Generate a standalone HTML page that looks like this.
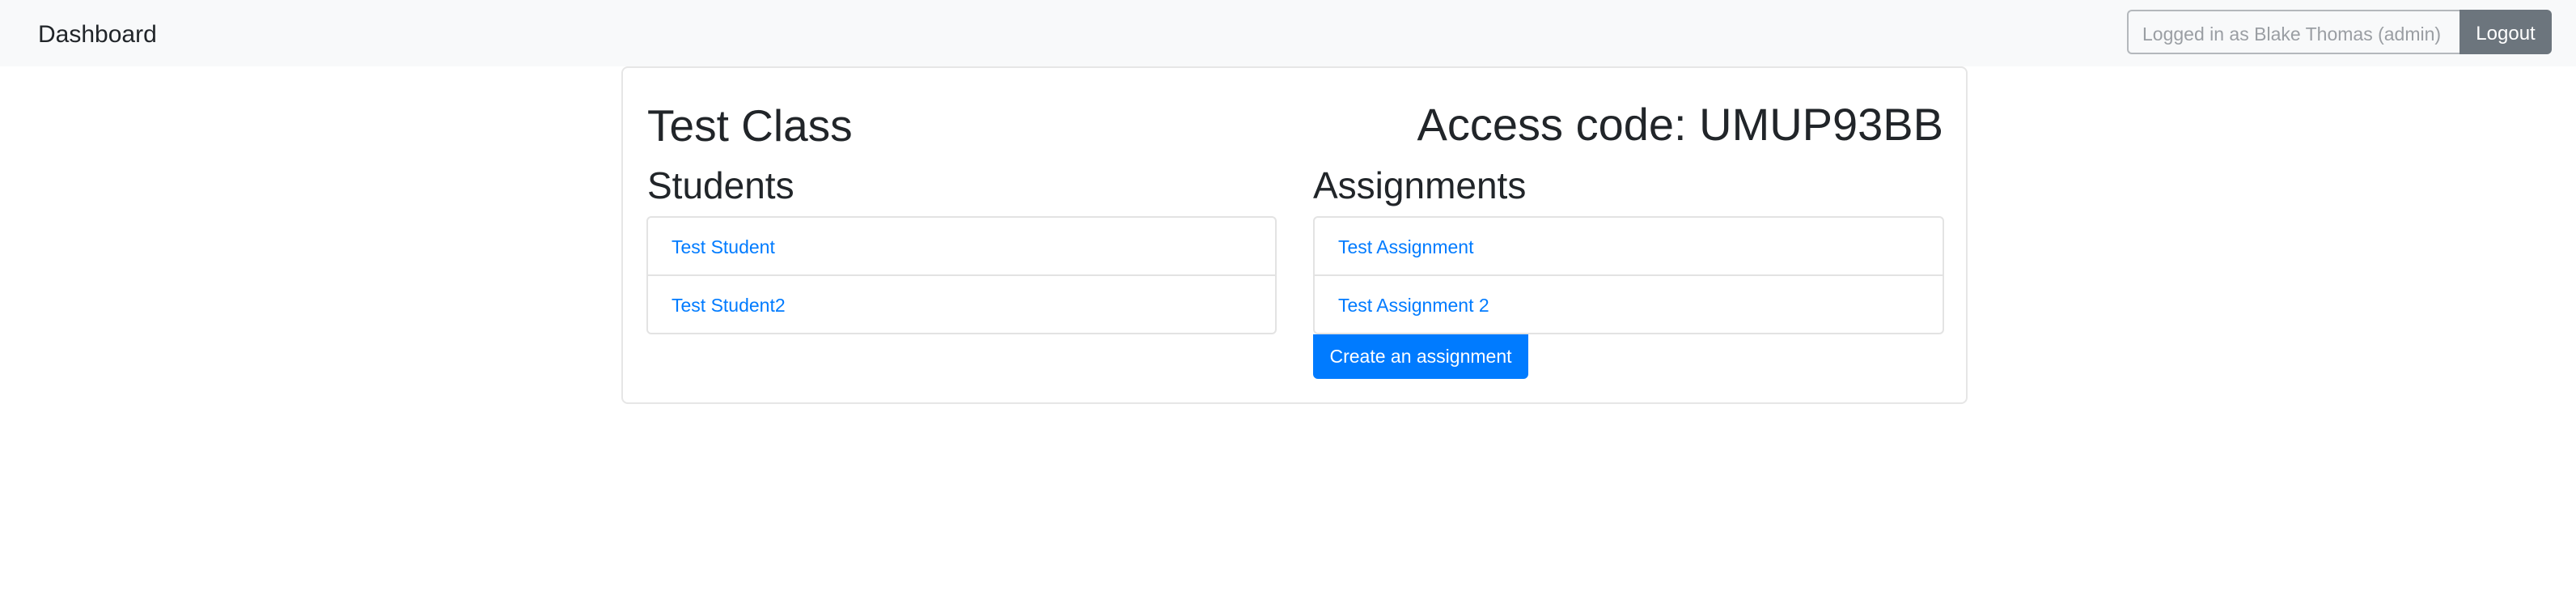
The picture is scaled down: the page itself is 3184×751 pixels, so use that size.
<!DOCTYPE html>
<html><head><meta charset="utf-8"><style>
*{margin:0;padding:0;box-sizing:border-box}
body{width:3184px;height:751px;background:#fff;font-family:"Liberation Sans",sans-serif;color:#212529;position:relative;overflow:hidden}
.a{position:absolute;white-space:nowrap}
</style></head><body>
<div class="a" style="left:0;top:0;width:3184px;height:82px;background:#f8f9fa"></div>
<div class="a" style="left:47px;top:28px;font-size:30px;line-height:30px;color:#212529">Dashboard</div>
<div class="a" style="left:2629px;top:12px;width:414px;height:55px;border:2px solid #b4b8bc;border-right:none;border-radius:6px 0 0 6px;background:#f8f9fa"></div>
<div class="a" style="left:2648px;top:30px;font-size:23px;line-height:24px;color:#9a9ea3">Logged in as Blake Thomas (admin)</div>
<div class="a" style="left:3040px;top:12px;width:114px;height:55px;background:#6c757d;border-radius:0 6px 6px 0;color:#fff;font-size:24px;line-height:60px;text-align:center">Logout</div>

<div class="a" style="left:768px;top:82px;width:1664px;height:417px;border:2px solid #e6e6e6;border-radius:8px"></div>
<div class="a" style="left:800px;top:127px;font-size:55px;line-height:56px">Test Class</div>
<div class="a" style="right:782px;top:125px;font-size:56px;line-height:58px">Access code: UMUP93BB</div>
<div class="a" style="left:800px;top:206px;font-size:46px;line-height:46px">Students</div>
<div class="a" style="left:1623px;top:206px;font-size:46px;line-height:46px">Assignments</div>

<div class="a" style="left:799px;top:267px;width:779px;height:146px;border:2px solid #e3e3e3;border-radius:6px"></div>
<div class="a" style="left:799px;top:339px;width:779px;height:2px;background:#e3e3e3"></div>
<div class="a" style="left:830px;top:293px;font-size:23px;line-height:24px;color:#007bff">Test Student</div>
<div class="a" style="left:830px;top:365px;font-size:23px;line-height:24px;color:#007bff">Test Student2</div>

<div class="a" style="left:1623px;top:267px;width:780px;height:146px;border:2px solid #e3e3e3;border-radius:6px"></div>
<div class="a" style="left:1623px;top:339px;width:780px;height:2px;background:#e3e3e3"></div>
<div class="a" style="left:1654px;top:293px;font-size:23px;line-height:24px;color:#007bff">Test Assignment</div>
<div class="a" style="left:1654px;top:365px;font-size:23px;line-height:24px;color:#007bff">Test Assignment 2</div>

<div class="a" style="left:1623px;top:413px;width:266px;height:55px;background:#007bff;border-radius:0 0 6px 6px;color:#fff;font-size:23px;line-height:55px;text-align:center">Create an assignment</div>
</body></html>
